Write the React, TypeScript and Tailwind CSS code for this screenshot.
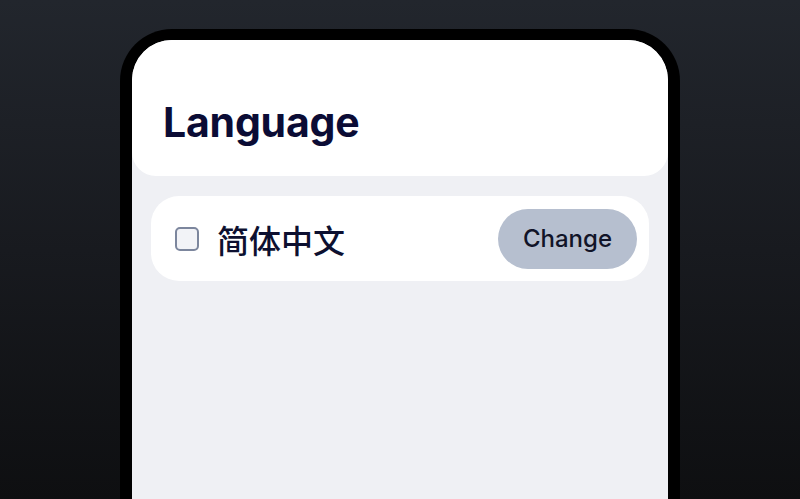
import { useState } from 'react';

function LanguageRow() {
  const [checked, setChecked] = useState(false);

  return (
    <div className="mx-[19px] mt-[20px] flex h-[85px] items-center rounded-[28px] bg-white pl-6 pr-3">
      <button
        onClick={() => setChecked(!checked)}
        className="h-[24px] w-[24px] shrink-0 rounded-[5px] border-2 border-[#7c869d] bg-[#f2f3f7]"
        aria-label="select"
      />
      <span
        className="ml-[18px] text-[32px] font-medium leading-none text-[#0d1030]"
        style={{ fontFamily: '"Noto Sans CJK SC", "Noto Sans", sans-serif' }}
      >
        简体中文
      </span>
      <button
        className="ml-auto flex h-[60px] w-[139px] items-center justify-center rounded-full bg-[#b6bfcf] text-[24px] font-medium text-[#111428]"
        style={{ fontFamily: 'Inter, "Liberation Sans", sans-serif' }}
      >
        Change
      </button>
    </div>
  );
}

export default function App() {
  return (
    <div className="h-[499px] w-full overflow-hidden bg-gradient-to-b from-[#22262d] via-[#181a1f] to-[#0e0f11] px-[120px] pt-[29px]">
      {/* phone frame */}
      <div className="h-full rounded-t-[52px] bg-black px-3 pt-[11px]">
        <div className="h-full overflow-hidden rounded-t-[40px] bg-[#eff0f4]">
          {/* header */}
          <div className="flex h-[136px] items-center rounded-b-[24px] bg-white px-[31px] pt-[28px]">
            <h1
              className="text-[41px] font-bold leading-none tracking-[-0.2px] text-[#0b0c35]"
              style={{ fontFamily: 'Inter, "Liberation Sans", sans-serif' }}
            >
              Language
            </h1>
          </div>

          <LanguageRow />
        </div>
      </div>
    </div>
  );
}
